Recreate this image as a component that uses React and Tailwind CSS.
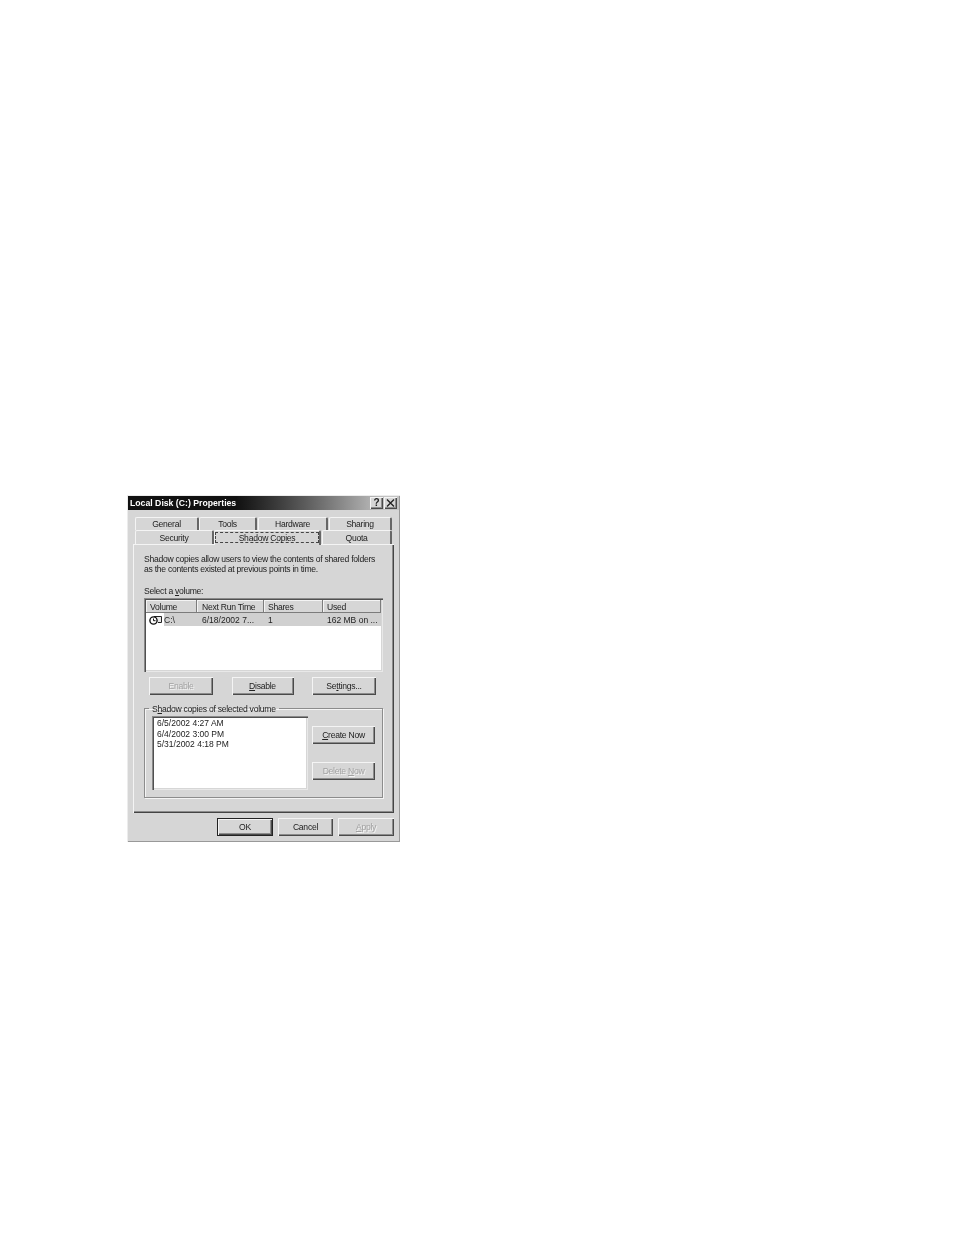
import React from 'react';

const raised = 'bg-[#d6d6d6] shadow-[inset_1px_1px_0_#f4f4f4,inset_-1px_-1px_0_#4a4a4a,inset_-2px_-2px_0_#8c8c8c]';
const sunken = 'bg-white shadow-[inset_1px_1px_0_#8a8a8a,inset_2px_2px_0_#505050,inset_-1px_-1px_0_#e8e8e8,inset_-2px_-2px_0_#d6d6d6]';

const Button = ({ className = '', disabled = false, children }) => (
  <div
    className={`flex h-[18px] items-center justify-center ${raised} ${
      disabled ? 'text-[#a2a2a2] [text-shadow:1px_1px_0_#f4f4f4]' : 'text-[#222]'
    } ${className}`}
  >
    <span>{children}</span>
  </div>
);

const Tab = ({ className = '', children }) => (
  <div
    className={`flex items-center justify-center rounded-t-[2px] border-t border-l border-[#f4f4f4] border-r-2 border-r-[#666] bg-[#d6d6d6] text-[#222] ${className}`}
  >
    {children}
  </div>
);

const HeaderCell = ({ className = '', children }) => (
  <div className={`flex h-[13px] items-center pl-[4px] bg-[#d6d6d6] shadow-[inset_-1px_-1px_0_#7c7c7c,inset_1px_1px_0_#f4f4f4] ${className}`}>
    {children}
  </div>
);

const DriveIcon = () => (
  <svg width="16" height="12" viewBox="0 0 16 12" className="shrink-0">
    <path d="M6 2.5h7.5v6H10" fill="#e8e8e8" stroke="#222" strokeWidth="1" />
    <circle cx="5.5" cy="6.5" r="3.6" fill="#fff" stroke="#111" strokeWidth="1.4" />
    <path d="M5.5 4.5v2.2h2" fill="none" stroke="#111" strokeWidth="1" />
  </svg>
);

const App = () => {
  return (
    <div className="min-h-[1235px] bg-white pl-[127px] pt-[495px] font-['Liberation_Sans',Arial,sans-serif] text-[8.6px] leading-[10px] tracking-[-0.27px] whitespace-nowrap">
      <div className="h-[347px] w-[273px] bg-[#d6d6d6] px-[6px] pt-px blur-[0.45px] shadow-[inset_1px_1px_0_#ececec,inset_-1px_-1px_0_#999]">
        {/* Title bar */}
        <div className="-mx-[5px] flex h-[14px] items-center justify-between bg-gradient-to-r from-[#111] from-40% to-[#c4c4c4] to-95% pl-[2px] pr-[2px]">
          <span className="text-[8.7px] font-bold tracking-normal text-white">Local Disk (C:) Properties</span>
          <div className="flex gap-[1px]">
            <div className={`flex h-[12px] w-[13px] items-center justify-center text-[10px] font-bold text-[#222] ${raised}`}>?</div>
            <div className={`flex h-[12px] w-[13px] items-center justify-center ${raised}`}>
              <svg width="9" height="8" viewBox="0 0 9 8">
                <path d="M1 0.5l7 7M8 0.5l-7 7" stroke="#222" strokeWidth="1.4" />
              </svg>
            </div>
          </div>
        </div>

        {/* Tabs */}
        <div className="mt-[7px] ml-[2px] flex h-[13px]">
          <Tab className="w-[64px]">General</Tab>
          <Tab className="w-[58px]">Tools</Tab>
          <Tab className="ml-px w-[70px]">Hardware</Tab>
          <Tab className="ml-px w-[63px]">Sharing</Tab>
        </div>
        <div className="ml-[2px] flex h-[14px]">
          <Tab className="w-[79px] pt-px">Security</Tab>
          <Tab className="h-[15px] w-[107px] !items-start">
            <span className="mt-px flex h-[11px] w-[104px] items-center justify-center border border-dashed border-[#444]">Shadow Copies</span>
          </Tab>
          <Tab className="ml-px w-[70px] pt-px">Quota</Tab>
        </div>

        {/* Panel */}
        <div className="h-[269px] w-[261px] bg-[#d6d6d6] px-[11px] pt-[10px] text-[#222] shadow-[inset_1px_1px_0_#f4f4f4,inset_-1px_-1px_0_#444,inset_-2px_-2px_0_#8c8c8c]">
          <p>Shadow copies allow users to view the contents of shared folders</p>
          <p>as the contents existed at previous points in time.</p>
          <p className="mt-[12px]">Select a <u>v</u>olume:</p>

          {/* Volume list */}
          <div className={`mt-[2px] h-[74px] w-[239px] p-[2px] ${sunken}`}>
            <div className="grid grid-cols-[51px_67px_59px_58px]">
              <HeaderCell>Volume</HeaderCell>
              <HeaderCell className="pl-[5px]">Next Run Time</HeaderCell>
              <HeaderCell>Shares</HeaderCell>
              <HeaderCell>Used</HeaderCell>
            </div>
            <div className="grid h-[13px] grid-cols-[51px_67px_59px_58px] items-center text-[8.5px] tracking-normal">
              <div className="flex h-full items-center pl-[2px]">
                <DriveIcon />
                <span className="flex h-full flex-1 items-center bg-[#d0d0d0]">C:\</span>
              </div>
              <div className="flex h-full items-center bg-[#d0d0d0] pl-[5px]">6/18/2002 7...</div>
              <div className="flex h-full items-center bg-[#d0d0d0] pl-[4px]">1</div>
              <div className="flex h-full items-center bg-[#d0d0d0] pl-[4px]">162 MB on ...</div>
            </div>
          </div>

          <div className="mt-[5px] ml-[5px] flex w-[227px] justify-between">
            <Button className="w-[64px]" disabled>Enable</Button>
            <Button className="w-[62px]"><u>D</u>isable</Button>
            <Button className="w-[64px]">Se<u>t</u>tings...</Button>
          </div>

          {/* Group box */}
          <fieldset className="mt-[8px] h-[95px] w-[239px] border border-[#8c8c8c] px-[7px] shadow-[1px_1px_0_#f4f4f4,inset_1px_1px_0_#f4f4f4]">
            <legend className="-ml-[3px] px-[3px] pt-px">S<u>h</u>adow copies of selected volume</legend>
            <div className="mt-[2px] flex">
              <div className={`h-[74px] w-[156px] pl-[5px] pt-[2px] text-[8.5px] leading-[10.5px] tracking-normal ${sunken}`}>
                <p>6/5/2002 4:27 AM</p>
                <p>6/4/2002 3:00 PM</p>
                <p>5/31/2002 4:18 PM</p>
              </div>
              <div className="ml-[4px] flex flex-col gap-[18px] pt-[10px]">
                <Button className="w-[63px]"><u>C</u>reate Now</Button>
                <Button className="w-[63px]" disabled>Delete <u>N</u>ow</Button>
              </div>
            </div>
          </fieldset>
        </div>

        {/* Footer buttons */}
        <div className="mt-[5px] flex justify-end gap-[5px]">
          <div className="border border-[#222]">
            <Button className="!h-[16px] w-[54px]">OK</Button>
          </div>
          <Button className="w-[55px]">Cancel</Button>
          <Button className="w-[56px]" disabled><u>A</u>pply</Button>
        </div>
      </div>
    </div>
  );
};

export default App;
